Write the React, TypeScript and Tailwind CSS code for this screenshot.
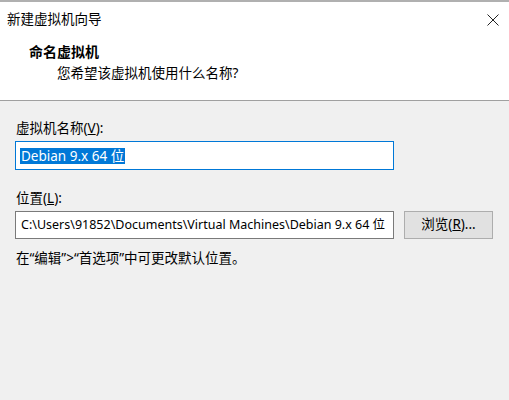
import React from 'react';

const font = { fontFamily: '"Noto Sans", "Noto Sans CJK SC", sans-serif' };

const App = () => {
  return (
    <div className="w-[509px] h-[400px] bg-[#f0f0f0] text-black overflow-hidden flex flex-col" style={font}>
      {/* window edge */}
      <div className="h-[2px] bg-[#b0b0b0]" />

      {/* header */}
      <div className="bg-white h-[99px] border-b border-[#a0a0a0] flex flex-col">
        <div className="h-[34px] flex items-center justify-between pl-[7px] pr-[10px] pt-[1px]">
          <span className="text-[13.5px] leading-none">新建虚拟机向导</span>
          <svg width="12" height="12" viewBox="0 0 12 12" className="text-[#222]">
            <path d="M0.5 0.5 L11.5 11.5 M11.5 0.5 L0.5 11.5" stroke="currentColor" strokeWidth="1" />
          </svg>
        </div>
        <div className="pl-[29px] mt-[7px] text-[14px] font-bold leading-[18px]">命名虚拟机</div>
        <div className="pl-[57px] mt-[3px] text-[13.5px] leading-[18px]">您希望该虚拟机使用什么名称?</div>
      </div>

      {/* body */}
      <div className="flex flex-col px-[15px]">
        <div className="mt-[17px] pl-[1px] text-[13.5px] leading-[20px]">
          虚拟机名称(<span className="underline">V</span>):
        </div>
        <div className="mt-[3px] w-[379px] h-[29px] bg-white border border-[#0078d7] flex items-center pl-[4px]">
          <span className="bg-[#0078d7] text-white text-[13.5px] leading-[16px] px-[1px]">Debian 9.x 64 位</span>
        </div>

        <div className="mt-[18px] pl-[1px] text-[13.5px] leading-[20px]">
          位置(<span className="underline">L</span>):
        </div>
        <div className="mt-[3px] flex items-center gap-[10px]">
          <div className="w-[379px] h-[28px] shrink-0 bg-white border border-[#7a7a7a] flex items-center pl-[5px] overflow-hidden whitespace-nowrap">
            <span className="text-[12.5px] leading-[16px]">C:\Users\91852\Documents\Virtual Machines\Debian 9.x 64 位</span>
          </div>
          <button className="w-[89px] h-[28px] shrink-0 bg-[#e1e1e1] border border-[#adadad] text-[13.5px] leading-none flex items-center justify-center">
            浏览(<span className="underline">R</span>)...
          </button>
        </div>

        <div className="mt-[9px] pl-[1px] text-[13.5px] leading-[20px]">在“编辑”&gt;“首选项”中可更改默认位置。</div>
      </div>
    </div>
  );
};

export default App;
